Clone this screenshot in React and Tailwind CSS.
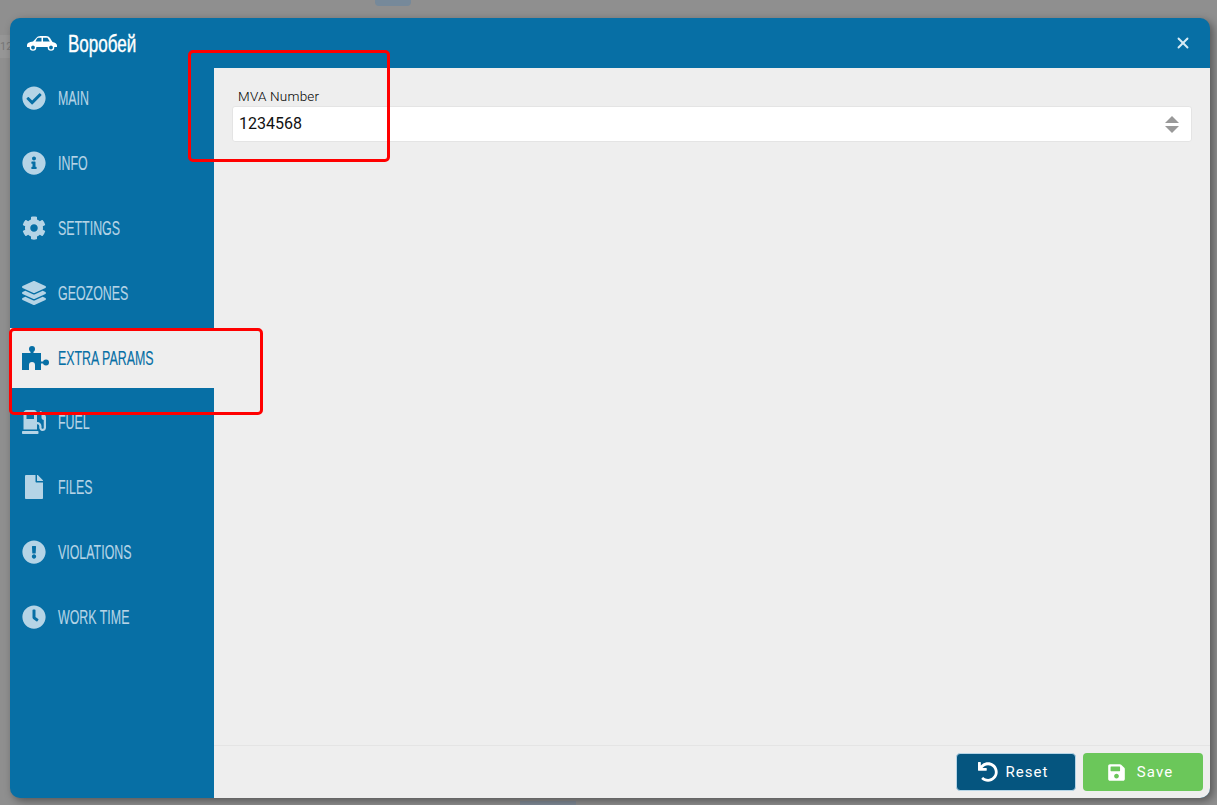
import React from 'react';
import { FaCheckCircle, FaInfoCircle, FaCog, FaLayerGroup, FaGasPump, FaFile, FaExclamationCircle, FaClock, FaUndo, FaSave } from 'react-icons/fa';
import { X } from 'lucide-react';

function CarIcon() {
    return (
        <svg viewBox="0 0 30 16" className="h-4 w-[30px]" fill="white">
            <path
                fillRule="evenodd"
                d="M0 10C0 8 2 7 6 6.5L10 2.2C11 1.2 13 1 15 1H19C21 1 22 1.8 23 3L25.5 7C28 7.5 30 8.5 30 10.5V12H0ZM8.5 6.5H14.5V2.8H12C11 2.8 10.5 3 10 3.6ZM16 2.8V6.5H22.8L21 3.4C20.6 2.9 20 2.8 19 2.8Z"
            />
            <circle cx="6" cy="12.5" r="2.6" fill="#076fa5" stroke="white" strokeWidth="1.4" />
            <circle cx="24" cy="12.5" r="2.6" fill="#076fa5" stroke="white" strokeWidth="1.4" />
        </svg>
    );
}

function PuzzleIcon() {
    return (
        <svg viewBox="0 0 27 26" className="ml-[3px] h-[26px] w-[27px] shrink-0" fill="currentColor">
            <path d="M0 8H8.5V4H11.5V8H19V25H13V20A3 3 0 0 0 7 20V25H0Z" />
            <circle cx="10" cy="4" r="3" />
            <rect x="19" y="16.5" width="5" height="2" />
            <circle cx="24" cy="17.5" r="3" />
        </svg>
    );
}

const menuItems = [
    { label: 'MAIN', icon: <FaCheckCircle className="text-[24px]" /> },
    { label: 'INFO', icon: <FaInfoCircle className="text-[24px]" /> },
    { label: 'SETTINGS', icon: <FaCog className="text-[24px]" /> },
    { label: 'GEOZONES', icon: <FaLayerGroup className="text-[24px]" /> },
    { label: 'EXTRA PARAMS', icon: <PuzzleIcon />, active: true },
    { label: 'FUEL', icon: <FaGasPump className="text-[24px]" /> },
    { label: 'FILES', icon: <FaFile className="text-[24px]" /> },
    { label: 'VIOLATIONS', icon: <FaExclamationCircle className="text-[24px]" /> },
    { label: 'WORK TIME', icon: <FaClock className="text-[24px]" /> },
];

function MenuItem({ label, icon, active }) {
    return (
        <div className={`flex h-[60px] items-center pl-3 ${active ? 'mb-[-1px] bg-[#eeeeee] text-[#076fa5]' : 'text-[#b5d4e6]'}`}>
            <div className="flex w-6 justify-center">{icon}</div>
            <span className="ml-3 origin-left scale-x-[0.62] whitespace-nowrap font-['Liberation_Sans',sans-serif] text-[20px] [-webkit-text-stroke:0.15px_currentColor]">{label}</span>
        </div>
    );
}

export default function App() {
    return (
        <div className="relative h-[805px] w-[1217px] overflow-hidden bg-[#8f8f8f] pl-[10px] pt-[18px] font-['Roboto',sans-serif]">
            {/* page behind the overlay */}
            <div className="absolute left-[375px] top-0 h-[6px] w-[36px] rounded-b-[4px] bg-[#76899a]" />
            <div className="absolute left-[520px] top-[801px] h-[4px] w-[56px] bg-[#808a96]" />
            <div className="absolute left-0 top-[35px] h-[23px] w-[10px] bg-[#969696] text-[11px] leading-[23px] text-[#777777]">12</div>

            <div className="relative flex h-[780px] w-[1200px] flex-col overflow-hidden rounded-[10px] bg-[#076fa5] shadow-[3px_3px_8px_rgba(0,0,0,0.4)]">
                <div className="flex h-[50px] shrink-0 items-center justify-between pl-[17px] pr-[18px]">
                    <div className="flex items-center text-white">
                        <CarIcon />
                        <span className="ml-[11px] mt-[2px] origin-left scale-x-[0.71] whitespace-nowrap font-['Liberation_Sans',sans-serif] text-[24px] [-webkit-text-stroke:0.4px_currentColor]">Воробей</span>
                    </div>
                    <X className="h-[18px] w-[18px] text-[#d8ebf5]" strokeWidth={2.5} />
                </div>
                <div className="flex min-h-0 flex-1">
                    <div className="flex w-[204px] shrink-0 flex-col gap-[5px]">
                        {menuItems.map((item) => (
                            <MenuItem key={item.label} {...item} />
                        ))}
                    </div>
                    <div className="flex flex-1 flex-col bg-[#eeeeee]">
                        <div className="flex-1 px-[18px] pt-[20px]">
                            <div className="pl-[6px] text-[13.5px] font-light leading-[17px] tracking-[0.015em] text-black">MVA Number</div>
                            <div className="mt-[1px] flex h-[36px] items-center justify-between rounded-[3px] border border-[#e4e4e4] bg-white pl-[6px] pr-[12px] text-[16px] text-[#111111]">
                                <span>1234568</span>
                                <div className="flex flex-col gap-[3px]">
                                    <div className="h-0 w-0 border-x-[7px] border-b-[7px] border-x-transparent border-b-[#999999]" />
                                    <div className="h-0 w-0 border-x-[7px] border-t-[7px] border-x-transparent border-t-[#999999]" />
                                </div>
                            </div>
                        </div>
                        <div className="flex h-[53px] items-center justify-end gap-[7px] border-t border-[#e4e4e4] pr-[7px]">
                            <button className="flex h-[38px] w-[120px] items-center justify-center rounded-[4px] border border-[#b5d4e6] bg-[#05557f] pr-[5px] text-[15px] tracking-[0.07em] text-white">
                                <FaUndo className="mr-[7px] text-[20px]" />
                                Reset
                            </button>
                            <button className="flex h-[38px] w-[120px] items-center justify-center rounded-[4px] bg-[#6bc75a] pr-[6px] text-[15px] tracking-[0.07em] text-white">
                                <FaSave className="mr-[11px] text-[19px]" />
                                Save
                            </button>
                        </div>
                    </div>
                </div>
            </div>

            {/* red annotation boxes */}
            <div className="absolute left-[188px] top-[50px] h-[112px] w-[202px] rounded-[5px] border-[3px] border-[#ff0000]" />
            <div className="absolute left-[9px] top-[328px] h-[87px] w-[254px] rounded-[5px] border-[3px] border-[#ff0000]" />
        </div>
    );
}
